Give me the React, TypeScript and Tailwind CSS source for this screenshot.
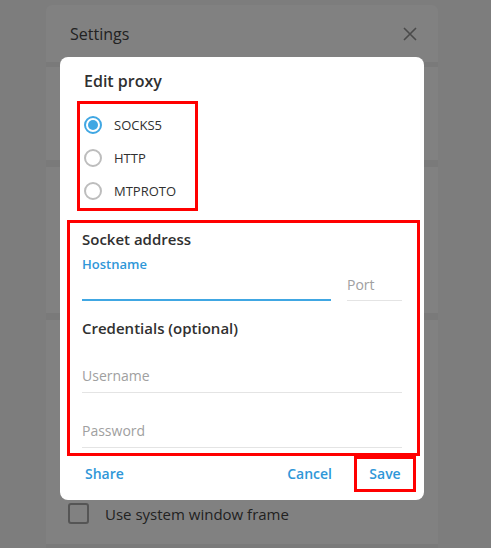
import { useState } from 'react';

const options = ['SOCKS5', 'HTTP', 'MTPROTO'];

export default function App() {
  const [type, setType] = useState('SOCKS5');

  return (
    <div className="relative h-[548px] w-[491px] overflow-hidden bg-[#7d7d7d] font-['Open_Sans',sans-serif]">
      {/* settings panel behind the overlay */}
      <div className="ml-[46px] mt-[5px] flex h-[543px] w-[392px] flex-col rounded-t-[6px] bg-[#818181]">
        <div className="flex h-[57px] items-center justify-between pl-[24px] pr-[20px]">
          <span className="text-[16px] font-medium leading-[22px] text-[#222]">Settings</span>
          <svg width="16" height="16" viewBox="0 0 16 16" className="text-[#4a4a4a]">
            <path d="M2 2L14 14M14 2L2 14" stroke="currentColor" strokeWidth="1.6" />
          </svg>
        </div>
        <div className="h-[5px] bg-[#7a7a7a]" />
        <div className="h-[93px]" />
        <div className="h-[7px] bg-[#7a7a7a]" />
        <div className="h-[146px]" />
        <div className="h-[7px] bg-[#7a7a7a]" />
        <div className="flex flex-1 flex-col justify-end pb-[20px] pl-[22px]">
          <div className="flex items-center gap-[16px]">
            <div className="h-[21px] w-[21px] rounded-[3px] border-2 border-[#555]" />
            <span className="text-[15px] leading-[20px] text-[#222]">Use system window frame</span>
          </div>
        </div>
        <div className="h-[4px] bg-[#7a7a7a]" />
      </div>

      {/* edit proxy dialog */}
      <div className="absolute left-[60px] top-[57px] w-[364px] rounded-[8px] bg-white pb-[8px] pt-[13px]">
        <div className="pl-[24px] text-[16px] font-semibold leading-[22px] text-[#303030]">Edit proxy</div>

        <div className="ml-[17px] mt-[9px] w-[121px] border-[3px] border-[#ff0000] pb-[1px] pl-[4px] pt-[4px]">
          {options.map((o) => {
            const on = o === type;
            return (
              <button
                key={o}
                onClick={() => setType(o)}
                className="flex h-[33px] items-center gap-[12px]"
              >
                <span
                  className={`flex h-[18px] w-[18px] items-center justify-center rounded-full border-2 ${
                    on ? 'border-[#40a7e3]' : 'border-[#bdbdbd]'
                  }`}
                >
                  {on && <span className="h-[10px] w-[10px] rounded-full bg-[#40a7e3]" />}
                </span>
                <span className="text-[13px] leading-[18px] text-[#303030]">{o}</span>
              </button>
            );
          })}
        </div>

        <div className="ml-[7px] mt-[9px] w-[353px] border-[3px] border-[#ff0000] pb-[5px] pl-[12px] pr-[15px] pt-[6px]">
          <div className="text-[15px] font-semibold leading-[20px] text-[#303030]">Socket address</div>
          <div className="mt-[7px] flex items-end gap-[16px]">
            <div className="w-[249px]">
              <div className="text-[13px] font-semibold leading-[17px] text-[#2f97d8]">Hostname</div>
              <div className="h-[28px] border-b-2 border-[#40a7e3]" />
            </div>
            <div className="w-[55px] border-b border-[#e4e4e4] pb-[5px] text-[14px] leading-[20px] text-[#a0a0a0]">
              Port
            </div>
          </div>
          <div className="mt-[17px] text-[15px] font-semibold leading-[20px] text-[#303030]">
            Credentials (optional)
          </div>
          <div className="mt-[28px] border-b border-[#e4e4e4] pb-[6px] text-[14px] leading-[20px] text-[#a0a0a0]">
            Username
          </div>
          <div className="mt-[28px] border-b border-[#e4e4e4] pb-[6px] text-[14px] leading-[20px] text-[#a0a0a0]">
            Password
          </div>
        </div>

        <div className="flex items-center pl-[25px] pr-[8px]">
          <span className="text-[14px] font-semibold leading-[20px] text-[#2f97d8]">Share</span>
          <span className="ml-auto text-[14px] font-semibold leading-[20px] text-[#2f97d8]">Cancel</span>
          <span className="ml-[22px] flex h-[36px] w-[62px] items-center justify-center border-[3px] border-[#ff0000] text-[14px] font-semibold leading-[20px] text-[#2f97d8]">
            Save
          </span>
        </div>
      </div>
    </div>
  );
}
